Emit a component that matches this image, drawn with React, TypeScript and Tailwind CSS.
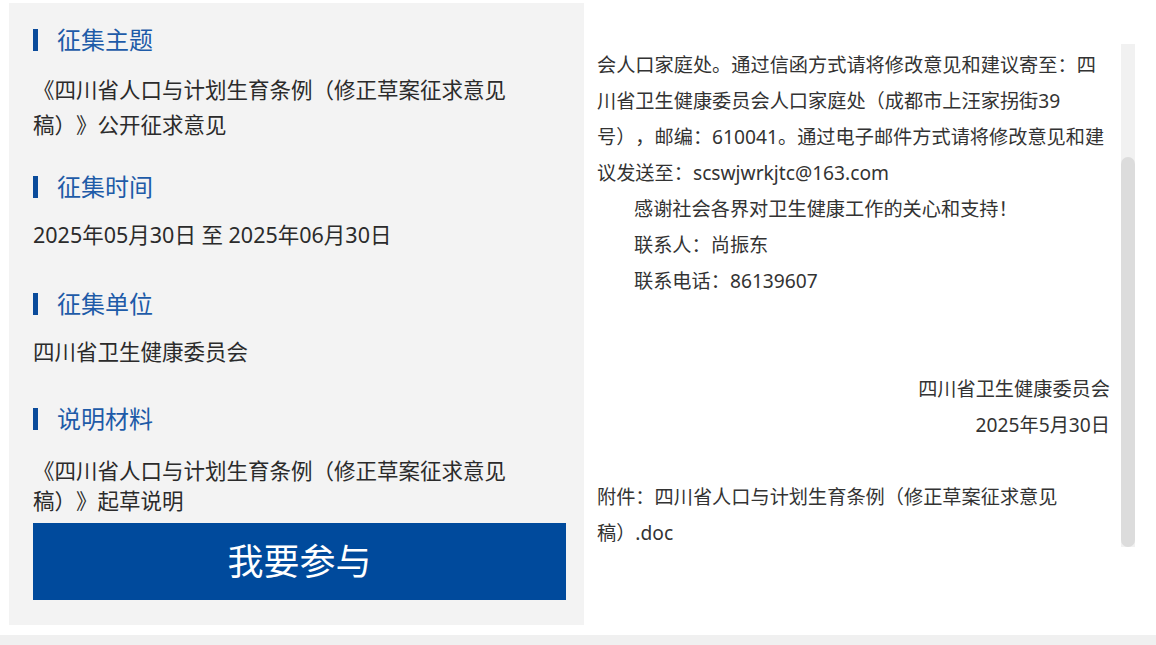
const FONT = { fontFamily: '"Noto Sans", "Noto Sans CJK SC", sans-serif' }

function Heading({ title, className }: { title: string; className?: string }) {
  return (
    <div className={`flex items-center ${className ?? ''}`}>
      <span className="w-[5px] h-[22px] bg-[#0a4b9b]" />
      <h3 className="ml-[19px] text-[24px] leading-[30px] text-[#1e5ba8]">{title}</h3>
    </div>
  )
}

export default function App() {
  return (
    <div className="w-[1156px] h-[645px] bg-white flex flex-col overflow-hidden [text-spacing-trim:space-all]" style={FONT}>
      <div className="flex h-[635px]">
        {/* left: summary panel */}
        <div className="ml-[9px] mt-[3px] w-[575px] h-[622px] bg-[#f3f3f3] pl-[24px] pr-[18px] pt-[22px]">
          <Heading title="征集主题" />
          <p className="mt-[17px] w-[484px] text-[21.5px] leading-[35px] text-[#2b2b2b]">
            《四川省人口与计划生育条例（修正草案征求意见稿）》公开征求意见
          </p>
          <Heading title="征集时间" className="mt-[30px]" />
          <p className="mt-[15px] text-[21.5px] leading-[35px] text-[#2b2b2b]">
            2025年05月30日 至 2025年06月30日
          </p>
          <Heading title="征集单位" className="mt-[37px]" />
          <p className="mt-[15px] text-[21.5px] leading-[35px] text-[#2b2b2b]">四川省卫生健康委员会</p>
          <Heading title="说明材料" className="mt-[35px]" />
          <p className="mt-[22px] w-[484px] text-[21.5px] leading-[30px] text-[#2b2b2b]">
            《四川省人口与计划生育条例（修正草案征求意见稿）》起草说明
          </p>
          <button className="mt-[7px] w-[533px] h-[77px] bg-[#004a9c] text-white text-[36px] flex items-center justify-center">
            我要参与
          </button>
        </div>

        {/* right: notice text */}
        <div className="ml-[13px] w-[513px] pt-[47px] text-[19.2px] leading-[36px] text-[#333]">
          <p>
            会人口家庭处。通过信函方式请将修改意见和建议寄至：四川省卫生健康委员会人口家庭处（成都市上汪家拐街39号），邮编：610041。通过电子邮件方式请将修改意见和建议发送至：scswjwrkjtc@163.com
          </p>
          <p className="indent-[37px]">感谢社会各界对卫生健康工作的关心和支持！</p>
          <p className="indent-[37px]">联系人：尚振东</p>
          <p className="indent-[37px]">联系电话：86139607</p>
          <div className="mt-[72px] text-right">
            <p>四川省卫生健康委员会</p>
            <p>2025年5月30日</p>
          </div>
          <p className="mt-[36px]">附件：四川省人口与计划生育条例（修正草案征求意见稿）.doc</p>
        </div>

        {/* scrollbar */}
        <div className="ml-[11px] mt-[44px] w-[14px] h-[503px] bg-[#f1f1f1] flex flex-col justify-end">
          <div className="h-[390px] bg-[#dcdcdc] rounded-[7px]" />
        </div>
      </div>
      <div className="h-[10px] bg-[#f0f0f0]" />
    </div>
  )
}
